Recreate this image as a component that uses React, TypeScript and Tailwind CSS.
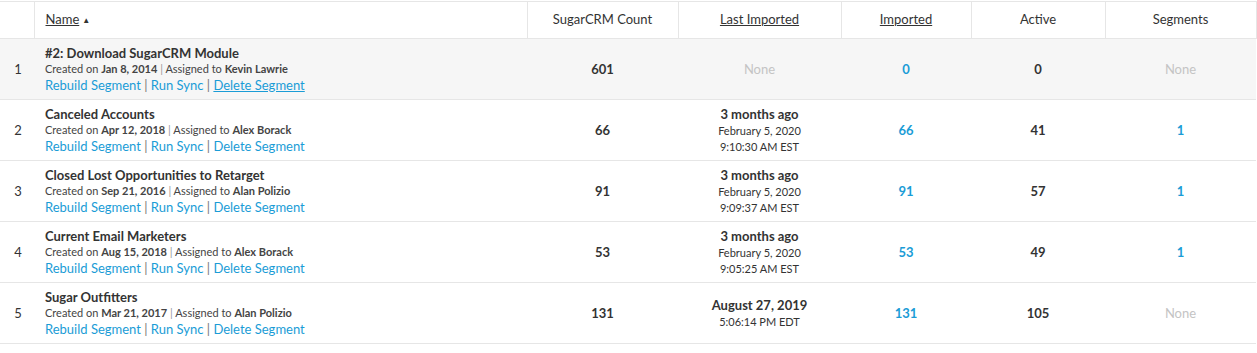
import { Fragment } from "react"

type Row = {
  name: string
  created: string
  owner: string
  count: string
  last: { main: string; date?: string; time: string } | null
  imported: string
  active: string
  segments: string | null
}

const rows: Row[] = [
  { name: "#2: Download SugarCRM Module", created: "Jan 8, 2014", owner: "Kevin Lawrie", count: "601", last: null, imported: "0", active: "0", segments: null },
  { name: "Canceled Accounts", created: "Apr 12, 2018", owner: "Alex Borack", count: "66", last: { main: "3 months ago", date: "February 5, 2020", time: "9:10:30 AM EST" }, imported: "66", active: "41", segments: "1" },
  { name: "Closed Lost Opportunities to Retarget", created: "Sep 21, 2016", owner: "Alan Polizio", count: "91", last: { main: "3 months ago", date: "February 5, 2020", time: "9:09:37 AM EST" }, imported: "91", active: "57", segments: "1" },
  { name: "Current Email Marketers", created: "Aug 15, 2018", owner: "Alex Borack", count: "53", last: { main: "3 months ago", date: "February 5, 2020", time: "9:05:25 AM EST" }, imported: "53", active: "49", segments: "1" },
  { name: "Sugar Outfitters", created: "Mar 21, 2017", owner: "Alan Polizio", count: "131", last: { main: "August 27, 2019", time: "5:06:14 PM EDT" }, imported: "131", active: "105", segments: null },
]

const th = "h-[37px] border-l border-[#e6e6e6] text-center font-normal text-[13px] text-[#333]"
const td = "text-center align-middle leading-[16px]"

export default function App() {
  return (
    <div className="w-[1257px] h-[353px] bg-white pt-px text-[#333]" style={{ fontFamily: "Lato, 'Open Sans', sans-serif" }}>
      <table className="w-[1256px] border-collapse table-fixed">
        <colgroup>
          <col className="w-[34px]" />
          <col className="w-[493px]" />
          <col className="w-[151px]" />
          <col className="w-[163px]" />
          <col className="w-[130px]" />
          <col className="w-[134px]" />
          <col className="w-[151px]" />
        </colgroup>
        <thead>
          <tr className="border-t border-b border-r border-[#e6e6e6]">
            <th className="h-[37px] font-normal" />
            <th className={`${th} text-left pl-[11px]`}>
              <span className="underline">Name</span>
              <span className="text-[8px] ml-[3px] align-[1px]">▲</span>
            </th>
            <th className={th}>SugarCRM Count</th>
            <th className={th}><span className="underline">Last Imported</span></th>
            <th className={th}><span className="underline">Imported</span></th>
            <th className={th}>Active</th>
            <th className={th}>Segments</th>
          </tr>
        </thead>
        <tbody>
          {rows.map((r, i) => (
            <tr key={i} className={`h-[61px] border-b border-[#e6e6e6] ${i === 0 ? "bg-[#f6f6f6]" : ""}`}>
              <td className="text-center text-[13px] leading-[16px] pl-[2px]">{i + 1}</td>
              <td className="pl-[11px] align-middle">
                <div className="text-[13px] font-bold leading-[16px]">{r.name}</div>
                <div className="text-[11px] leading-[16px] text-[#444]">
                  Created on <b>{r.created}</b> <span className="text-[#999]">|</span> Assigned to <b>{r.owner}</b>
                </div>
                <div className="text-[13px] leading-[16px] text-[#1a9cd6]">
                  Rebuild Segment <span className="text-[#777]">|</span> Run Sync <span className="text-[#777]">|</span>{" "}
                  <span className={i === 0 ? "underline" : ""}>Delete Segment</span>
                </div>
              </td>
              <td className={`${td} text-[13px] font-bold`}>{r.count}</td>
              <td className={td}>
                {r.last ? (
                  <Fragment>
                    <div className="text-[13px] font-bold leading-[17px]">{r.last.main}</div>
                    {r.last.date && <div className="text-[11px] leading-[16px]">{r.last.date}</div>}
                    <div className="text-[11px] leading-[16px]">{r.last.time}</div>
                  </Fragment>
                ) : (
                  <div className="text-[13px] leading-[16px] text-[#c4c4c4]">None</div>
                )}
              </td>
              <td className={`${td} text-[13px] font-bold text-[#1a9cd6]`}>{r.imported}</td>
              <td className={`${td} text-[13px] font-bold`}>{r.active}</td>
              <td className={td}>
                {r.segments ? (
                  <div className="text-[13px] leading-[16px] font-bold text-[#1a9cd6]">{r.segments}</div>
                ) : (
                  <div className="text-[13px] leading-[16px] text-[#c4c4c4]">None</div>
                )}
              </td>
            </tr>
          ))}
        </tbody>
      </table>
    </div>
  )
}
